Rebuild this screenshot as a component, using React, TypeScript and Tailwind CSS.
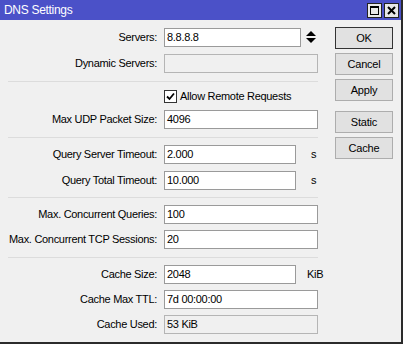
import React from "react";

const font = { fontFamily: '"Liberation Sans", Arial, sans-serif' };

function Label({ children }: { children: React.ReactNode }) {
  return (
    <div className="w-[157px] shrink-0 whitespace-nowrap text-right text-[11px] leading-[19px] tracking-[-0.3px] text-[#000]">
      {children}
    </div>
  );
}

function Field({
  value,
  width,
  disabled,
}: {
  value: string;
  width: string;
  disabled?: boolean;
}) {
  return (
    <div
      className={
        "ml-[7px] h-[19px] shrink-0 whitespace-nowrap border px-[2px] text-[11px] leading-[17px] tracking-[-0.3px] text-[#000] " +
        width +
        (disabled ? " border-[#b5b5b5] bg-[#f0f0f0]" : " border-[#9a9a9a] bg-white")
      }
    >
      {value}
    </div>
  );
}

function Sep({ mt }: { mt: string }) {
  return <div className={"ml-[8px] h-px w-[310px] bg-[#dcdcdc] " + mt} />;
}

function Btn({ label, primary, mt }: { label: string; primary?: boolean; mt: string }) {
  return (
    <div
      className={
        "flex h-[22px] w-[58px] items-center justify-center border bg-[#e1e1e1] text-[11px] tracking-[-0.2px] text-black " +
        mt +
        (primary ? " border-[#333]" : " border-[#adadad]")
      }
    >
      {label}
    </div>
  );
}

export default function App() {
  return (
    <div className="h-[345px] w-[405px] bg-white" style={font}>
      <div className="flex h-[344px] w-[403px] flex-col border-b-2 border-r-2 border-[#2b2b2b] bg-[#f0f0f0]">
        {/* title bar */}
        <div className="flex h-[20px] shrink-0 items-center bg-[#4b51c8] pl-[4px] pr-[2px]">
          <div className="text-[12px] leading-[20px] tracking-[-0.3px] text-white">DNS Settings</div>
          <div className="ml-auto flex items-center gap-[2px]">
            <div className="flex h-[15px] w-[15px] items-center justify-center border border-[#222] bg-[#e8e8e8]">
              <div className="h-[9px] w-[9px] border-[1.5px] border-t-2 border-black" />
            </div>
            <div className="flex h-[15px] w-[15px] items-center justify-center border border-[#222] bg-[#e8e8e8]">
              <svg width="9" height="9" viewBox="0 0 9 9">
                <path d="M1 1 L8 8 M8 1 L1 8" stroke="black" strokeWidth="2" />
              </svg>
            </div>
          </div>
        </div>

        {/* body */}
        <div className="flex">
          {/* left column */}
          <div className="flex w-[318px] shrink-0 flex-col">
            <div className="mt-[8px] flex items-center">
              <Label>Servers:</Label>
              <Field value="8.8.8.8" width="w-[137px]" />
              <svg className="ml-[5px]" width="10" height="13" viewBox="0 0 10 13">
                <path d="M5 0 L10 5 L0 5 Z" fill="black" />
                <path d="M0 7 L10 7 L5 12 Z" fill="black" />
              </svg>
            </div>
            <div className="mt-[7px] flex items-center">
              <Label>Dynamic Servers:</Label>
              <Field value="" width="w-[154px]" disabled />
            </div>
            <Sep mt="mt-[8px]" />
            <div className="mt-[7px] flex h-[15px] items-center pl-[164px]">
              <div className="flex h-[13px] w-[13px] items-center justify-center border border-[#333] bg-white">
                <svg width="9" height="9" viewBox="0 0 9 9">
                  <path d="M1 4.5 L3.5 7 L8 1.5" stroke="black" strokeWidth="1.8" fill="none" />
                </svg>
              </div>
              <div className="ml-[3px] whitespace-nowrap text-[11px] leading-[15px] tracking-[-0.3px] text-black">
                Allow Remote Requests
              </div>
            </div>
            <div className="mt-[6px] flex items-center">
              <Label>Max UDP Packet Size:</Label>
              <Field value="4096" width="w-[154px]" />
            </div>
            <Sep mt="mt-[8px]" />
            <div className="mt-[7px] flex items-center">
              <Label>Query Server Timeout:</Label>
              <Field value="2.000" width="w-[132px]" />
              <div className="ml-[15px] text-[11px] leading-[19px]">s</div>
            </div>
            <div className="mt-[7px] flex items-center">
              <Label>Query Total Timeout:</Label>
              <Field value="10.000" width="w-[132px]" />
              <div className="ml-[15px] text-[11px] leading-[19px]">s</div>
            </div>
            <Sep mt="mt-[7px]" />
            <div className="mt-[7px] flex items-center">
              <Label>Max. Concurrent Queries:</Label>
              <Field value="100" width="w-[154px]" />
            </div>
            <div className="mt-[6px] flex items-center">
              <Label>Max. Concurrent TCP Sessions:</Label>
              <Field value="20" width="w-[154px]" />
            </div>
            <Sep mt="mt-[8px]" />
            <div className="mt-[7px] flex items-center">
              <Label>Cache Size:</Label>
              <Field value="2048" width="w-[132px]" />
              <div className="ml-[11px] text-[11px] leading-[19px] tracking-[-0.3px]">KiB</div>
            </div>
            <div className="mt-[6px] flex items-center">
              <Label>Cache Max TTL:</Label>
              <Field value="7d 00:00:00" width="w-[154px]" />
            </div>
            <div className="mt-[6px] flex items-center">
              <Label>Cache Used:</Label>
              <Field value="53 KiB" width="w-[154px]" disabled />
            </div>
          </div>

          {/* right column */}
          <div className="ml-[17px] flex flex-col">
            <Btn label="OK" primary mt="mt-[7px]" />
            <Btn label="Cancel" mt="mt-[4px]" />
            <Btn label="Apply" mt="mt-[4px]" />
            <Btn label="Static" mt="mt-[10px]" />
            <Btn label="Cache" mt="mt-[4px]" />
          </div>
        </div>
      </div>
    </div>
  );
}
